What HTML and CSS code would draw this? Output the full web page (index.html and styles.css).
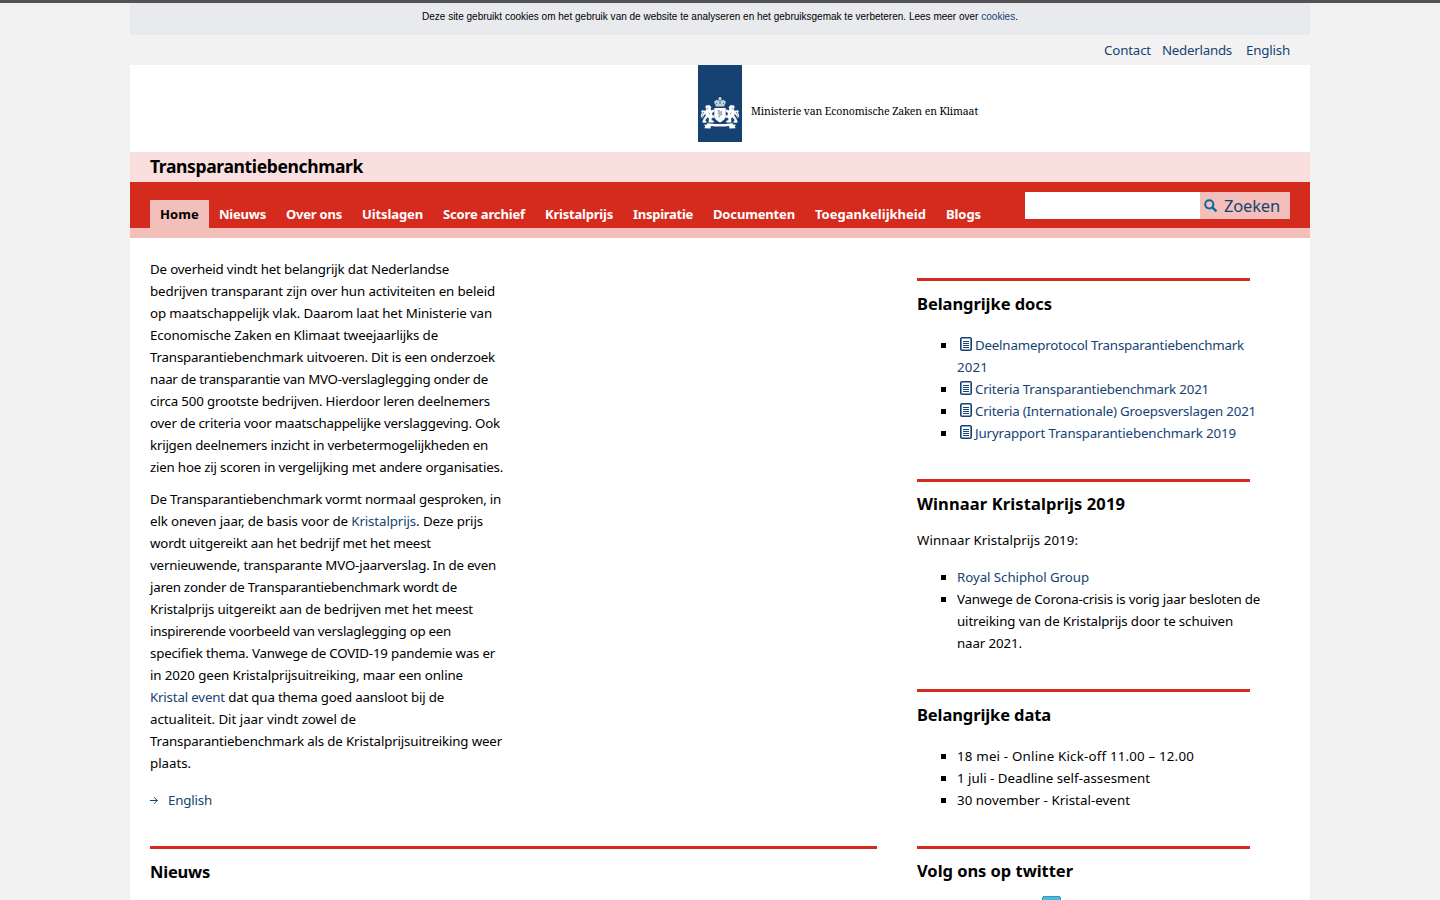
FILE: index.html
```html
<!DOCTYPE html>
<html lang="nl">
<head>
<meta charset="utf-8">
<title>Transparantiebenchmark</title>
<link rel="stylesheet" href="styles.css">
</head>
<body>
<svg class="defs" width="0" height="0">
  <symbol id="doc" viewBox="0 0 12 14"><rect x=".8" y=".8" width="10.4" height="12.4" rx="1.3" fill="#fff" stroke="#154273" stroke-width="1.6"/><path d="M3 4.500h6M3 6.500h6M3 8.500h6M3 10.500h6" stroke="#154273"/></symbol>
</svg>
<div class="page">
  <div class="cookie"><span data-w="596">Deze site gebruikt cookies om het gebruik van de website te analyseren en het gebruiksgemak te verbeteren. Lees meer over <a>cookies</a>.</span></div>
  <div class="langs"><a data-w="47">Contact</a><a class="nl" data-w="70">Nederlands</a><a data-w="44">English</a></div>
  <header class="logo">
    <div class="ribbon">
      <svg width="40" height="34" viewBox="0 0 40 34" fill="#fff">
        <g id="crown"><path d="M19.2 1h1.6v1.2h1v1.2h-1v1h-1.600v-1h-1V2.200h1z" opacity=".8"/><path d="M14.500 5.200q2-2 4.500-.6l1 .7 1-.7q2.500-1.400 4.500.6 1 1.500-.9 3.600l-.4 1.700h-8.400l-.4-1.700q-1.900-2.100-.9-3.600z" opacity=".75"/><path d="M16 7l1 1M20 5.500V8M24 7l-1 1" stroke="#154273" stroke-width=".8"/></g>
        <path d="M14.300 12h11.400v7.500q0 4.400-5.700 6.900-5.700-2.500-5.700-6.900z"/>
        <path d="M17.500 14.500l1.500-1 1.500 2 2-1-.8 2.500.8 2-2 .5-1 2.500-1.500-1.700 1-1.800-2-1 1.500-1z" fill="#154273" opacity=".4"/>
        <g id="lion"><path d="M5.500 10.300l2-1 2.300.3 1.300 1.700-.7 1.800 1 1.400 2.300-.8.7 1.500-2.500 1.800.3 2.200 2.200.5v1.800l-2.500.2-.7 2.200 2.300 1v1.400H8.800l.3-3.700-1.500-1.500-2.600 3.200 1.200 1v1.200H2.800v-1.500l1.400-3.100 1.800-2.600-.5-1.400-2 1.200.1 1.300-1.400-.5.2-2 2.100-1.500-1.400-.6-1.300.8-.4-1.400 2.500-.7 1.500.4 1-1.100z" stroke="#fff" stroke-width=".4"/><path d="M2.500 22Q.2 20 2 17.700q1.200-1.600.1-3.400" fill="none" stroke="#fff" stroke-width="1"/><path d="M7 12l1.500 1.200M8.600 17l1.500 1" stroke="#154273" stroke-width=".6"/></g>
        <use href="#lion" transform="matrix(-1 0 0 1 40 0)"/>
        <path d="M7 27.200l3 .2q10 1.400 20 0l3-.2v1.400l3 .2-1.300 1.700 1 1.800-6.200.2-.4-2.600q-9.100 1.300-18.200 0l-.4 2.600-6.200-.2 1-1.800L4 28.800l3-.2z"/>
      </svg>
    </div>
    <span class="ministry" data-w="227">Ministerie van Economische Zaken en Klimaat</span>
  </header>
  <div class="sitename"><span data-w="213">Transparantiebenchmark</span></div>
  <div class="bar">
    <nav>
      <a class="active" data-w="39">Home</a><a data-w="47">Nieuws</a><a data-w="56">Over ons</a><a data-w="61">Uitslagen</a><a data-w="82">Score archief</a><a data-w="68">Kristalprijs</a><a data-w="60">Inspiratie</a><a data-w="82">Documenten</a><a data-w="111">Toegankelijkheid</a><a data-w="35">Blogs</a>
    </nav>
    <div class="search"><input type="text" aria-label="Zoeken"><button><svg width="14" height="14" viewBox="0 0 14 14"><circle cx="5.300" cy="5.300" r="4.100" fill="none" stroke="#006ca5" stroke-width="2"/><path d="M8.300 8.300l4.200 4" stroke="#006ca5" stroke-width="2.300"/></svg><span data-w="56">Zoeken</span></button></div>
  </div>
  <div class="content">
    <main>
      <p>
        <span data-w="299">De overheid vindt het belangrijk dat Nederlandse</span>
        <span data-w="345">bedrijven transparant zijn over hun activiteiten en beleid</span>
        <span data-w="342">op maatschappelijk vlak. Daarom laat het Ministerie van</span>
        <span data-w="288">Economische Zaken en Klimaat tweejaarlijks de</span>
        <span data-w="345">Transparantiebenchmark uitvoeren. Dit is een onderzoek</span>
        <span data-w="338">naar de transparantie van MVO-verslaglegging onder de</span>
        <span data-w="340">circa 500 grootste bedrijven. Hierdoor leren deelnemers</span>
        <span data-w="350">over de criteria voor maatschappelijke verslaggeving. Ook</span>
        <span data-w="338">krijgen deelnemers inzicht in verbetermogelijkheden en</span>
        <span data-w="353">zien hoe zij scoren in vergelijking met andere organisaties.</span>
      </p>
      <p>
        <span data-w="351">De Transparantiebenchmark vormt normaal gesproken, in</span>
        <span data-w="333">elk oneven jaar, de basis voor de <a>Kristalprijs</a>. Deze prijs</span>
        <span data-w="281">wordt uitgereikt aan het bedrijf met het meest</span>
        <span data-w="346">vernieuwende, transparante MVO-jaarverslag. In de even</span>
        <span data-w="307">jaren zonder de Transparantiebenchmark wordt de</span>
        <span data-w="323">Kristalprijs uitgereikt aan de bedrijven met het meest</span>
        <span data-w="301">inspirerende voorbeeld van verslaglegging op een</span>
        <span data-w="345">specifiek thema. Vanwege de COVID-19 pandemie was er</span>
        <span data-w="313">in 2020 geen Kristalprijsuitreiking, maar een online</span>
        <span data-w="294"><a>Kristal event</a> dat qua thema goed aansloot bij de</span>
        <span data-w="206">actualiteit. Dit jaar vindt zowel de</span>
        <span data-w="352">Transparantiebenchmark als de Kristalprijsuitreiking weer</span>
        <span data-w="41">plaats.</span>
      </p>
      <div class="more"><svg width="8" height="8" viewBox="0 0 8 8"><path d="M0 4.500h7.500M4 1.200L7.300 4.500 4 7.800" fill="none" stroke="#154273"/></svg><a data-w="44">English</a></div>
      <section class="news"><h2><span data-w="60">Nieuws</span></h2></section>
    </main>
    <aside>
      <section class="docs">
        <h2><span data-w="135">Belangrijke docs</span></h2>
        <ul>
          <li><svg class="doc"><use href="#doc"/></svg><a data-w="269">Deelnameprotocol Transparantiebenchmark</a><br><a data-w="31">2021</a></li>
          <li><svg class="doc"><use href="#doc"/></svg><a data-w="234">Criteria Transparantiebenchmark 2021</a></li>
          <li><svg class="doc"><use href="#doc"/></svg><a data-w="281">Criteria (Internationale) Groepsverslagen 2021</a></li>
          <li><svg class="doc"><use href="#doc"/></svg><a data-w="261">Juryrapport Transparantiebenchmark 2019</a></li>
        </ul>
      </section>
      <section class="winner">
        <h2><span data-w="208">Winnaar Kristalprijs 2019</span></h2>
        <p><span data-w="161">Winnaar Kristalprijs 2019:</span></p>
        <ul>
          <li><a data-w="132">Royal Schiphol Group</a></li>
          <li><span data-w="303">Vanwege de Corona-crisis is vorig jaar besloten de</span><br><span data-w="276">uitreiking van de Kristalprijs door te schuiven</span><br><span data-w="65">naar 2021.</span></li>
        </ul>
      </section>
      <section class="dates">
        <h2><span data-w="134">Belangrijke data</span></h2>
        <ul>
          <li><span data-w="237">18 mei - Online Kick-off 11.00 – 12.00</span></li>
          <li><span data-w="193">1 juli - Deadline self-assesment</span></li>
          <li><span data-w="173">30 november - Kristal-event</span></li>
        </ul>
      </section>
      <section class="twitter"><h2><span data-w="156">Volg ons op twitter</span></h2><div class="bird"></div></section>
    </aside>
  </div>
</div>
<script src="fit.js"></script>
</body>
</html>
```
FILE: styles.css
```css
* { box-sizing: border-box; }
html, body { height: 100%; overflow: hidden; }
body { margin: 0; background: #f2f2f2; border-top: 3px solid #535353; color: #000; font: 13.3px/22px "Noto Sans", sans-serif; }
a { color: #154273; text-decoration: none; }
.defs { position: absolute; }
[data-w] { display: inline-block; white-space: pre; vertical-align: top; }
.page { width: 1180px; margin: 0 auto; }
.cookie { height: 32px; background: #e8eaee; text-align: center; font: 10px/27px "Liberation Sans", Arial, sans-serif; }
.langs { height: 30px; display: flex; justify-content: flex-end; padding: 4px 20px 0 0; }
.langs .nl { margin: 0 14px 0 11px; }
.logo { height: 87px; background: #fff; display: flex; padding-left: 568px; }
.ribbon { width: 44px; height: 77px; background: #154273; padding: 31px 2px 0; }
.ribbon svg { display: block; }
.ministry { margin: 35px 0 0 9px; font: 10.5px/22px "Noto Serif", "Liberation Serif", serif; }
.sitename { height: 30px; background: #f9dfdd; padding-left: 20px; font: bold 17.5px/29px "Noto Sans", sans-serif; }
.bar { height: 56px; background: #d52b1e; border-bottom: 10px solid #f2bfbb; padding: 0 20px; display: flex; justify-content: space-between; }
nav { display: flex; padding-top: 18px; font-weight: bold; font-size: 13px; }
nav a { height: 28px; margin: 0 10px; line-height: 28px; color: #fff; }
nav a.active { color: #000; background: #f2bfbb; box-shadow: -10px 0 #f2bfbb, 10px 0 #f2bfbb; }
.search { display: flex; margin-top: 10px; height: 27px; }
.search input { width: 175px; border: 0; padding: 0 5px; background: #fff; }
.search button { width: 90px; border: 0; padding: 0 0 0 4px; background: #f2bfbb; color: #154273; display: flex; align-items: center; font: 16.5px/26px "Noto Sans", sans-serif; }
.search button svg { margin-right: 6px; }
.content { height: 662px; background: #fff; padding: 0 20px; display: grid; grid-template-columns: 727px 353px; column-gap: 40px; overflow: hidden; }
main { padding-top: 20px; }
p { margin: 0 0 10px; }
main p { display: grid; justify-items: start; }
.more { display: flex; align-items: center; gap: 10px; margin-top: 15px; height: 22px; }
h2 { margin: 0; font: bold 16.5px/24px "Noto Sans", sans-serif; width: 333px; border-top: 3px solid #d52b1e; padding-top: 10px; height: 37px; }
.news h2 { width: 727px; margin-top: 35px; padding-top: 11px; }
aside { padding-top: 40px; }
ul { list-style: none; margin: 0; padding: 0 0 0 40px; }
li { position: relative; white-space: nowrap; }
li::before { content: ""; position: absolute; left: -16px; top: 9px; width: 5px; height: 5px; background: #000; }
.doc { width: 12px; height: 14px; margin: 3px 3px 0 3px; vertical-align: top; }
.docs { height: 201px; }
.docs h2, .dates h2 { padding-top: 11px; }
.docs ul, .dates ul { padding-top: 19px; }
.winner { height: 210px; }
.winner p { margin: 13px 0 15px; }
.dates { height: 157px; }
.bird { width: 19px; height: 19px; margin: 13px 0 0 125px; background: #4fb8de; border: 1px solid #2d9bc3; border-radius: 2px; }
```
FILE: fit.js
```js
document.querySelectorAll('[data-w]').forEach(function (el) {
  var range = document.createRange();
  range.selectNodeContents(el);
  var natural = range.getBoundingClientRect().width;
  el.style.letterSpacing = (el.dataset.w - natural) / el.textContent.length + 'px';
});
```
